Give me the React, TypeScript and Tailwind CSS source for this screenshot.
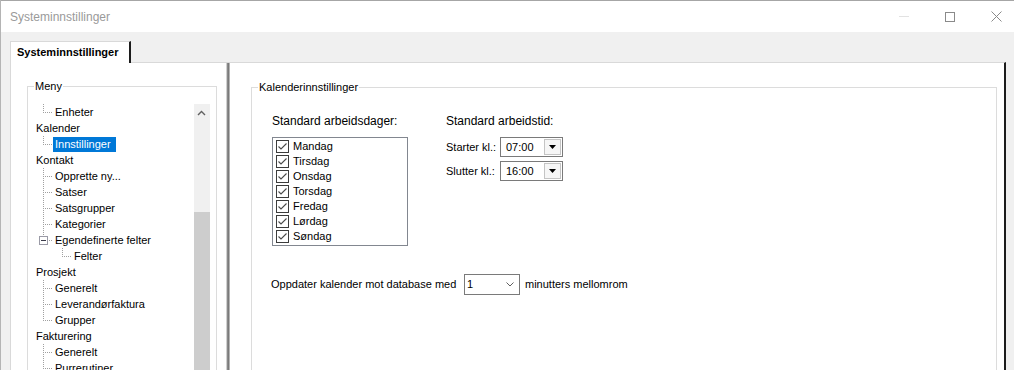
import React from 'react';

type Row = { t: string; lvl: 0 | 1 | 2; v?: 'top' | 'full' | 'box'; sel?: boolean };

const rows: Row[] = [
  { t: 'Enheter', lvl: 1, v: 'top' },
  { t: 'Kalender', lvl: 0 },
  { t: 'Innstillinger', lvl: 1, v: 'top', sel: true },
  { t: 'Kontakt', lvl: 0 },
  { t: 'Opprette ny...', lvl: 1, v: 'full' },
  { t: 'Satser', lvl: 1, v: 'full' },
  { t: 'Satsgrupper', lvl: 1, v: 'full' },
  { t: 'Kategorier', lvl: 1, v: 'full' },
  { t: 'Egendefinerte felter', lvl: 1, v: 'box' },
  { t: 'Felter', lvl: 2, v: 'top' },
  { t: 'Prosjekt', lvl: 0 },
  { t: 'Generelt', lvl: 1, v: 'full' },
  { t: 'Leverandørfaktura', lvl: 1, v: 'full' },
  { t: 'Grupper', lvl: 1, v: 'top' },
  { t: 'Fakturering', lvl: 0 },
  { t: 'Generelt', lvl: 1, v: 'full' },
  { t: 'Purrerutiner', lvl: 1, v: 'full' },
];

const dot = { stroke: '#a0a0a0', strokeDasharray: '1 1', strokeWidth: 1 };

function Connector({ lvl, v }: { lvl: 0 | 1 | 2; v?: Row['v'] }) {
  if (lvl === 0) return <div className="w-px shrink-0" />;
  const w = lvl === 1 ? 20 : 39;
  const x = lvl === 1 ? 10 : 29;
  return (
    <svg width={w} height={16} className="shrink-0" shapeRendering="crispEdges">
      {v === 'box' ? (
        <>
          <line x1={x + 0.5} y1={0} x2={x + 0.5} y2={4} {...dot} />
          <rect x={6.5} y={4.5} width={8} height={8} fill="#fff" stroke="#9a9aa6" strokeWidth={1} />
          <line x1={8} y1={8.5} x2={13} y2={8.5} stroke="#3b3b4a" strokeWidth={1} />
          <line x1={16} y1={8.5} x2={20} y2={8.5} {...dot} />
        </>
      ) : (
        <>
          <line x1={x + 0.5} y1={0} x2={x + 0.5} y2={v === 'full' ? 16 : 9} {...dot} />
          <line x1={x + 2} y1={8.5} x2={x + 10} y2={8.5} {...dot} />
        </>
      )}
    </svg>
  );
}

function Check() {
  return (
    <svg width="13" height="13" className="shrink-0" shapeRendering="geometricPrecision">
      <rect x="0.5" y="0.5" width="12" height="12" fill="#fff" stroke="#3c3c3c" strokeWidth="1" />
      <path d="M2.5 6.5 L5 9 L10.5 3.5" fill="none" stroke="#4a4a4a" strokeWidth="1.1" />
    </svg>
  );
}

function TimeCombo({ value }: { value: string }) {
  return (
    <div className="w-[63px] h-[20px] border border-[#7a7a7a] bg-white flex items-center">
      <span className="flex-1 pl-[5px] text-[11px] leading-none text-black">{value}</span>
      <div className="w-[17px] h-[16px] mr-px border border-[#c4c4c4] bg-[#f6f6f6] flex items-center justify-center">
        <svg width="7" height="4">
          <polygon points="0,0 7,0 3.5,4" fill="#000" />
        </svg>
      </div>
    </div>
  );
}

const days = ['Mandag', 'Tirsdag', 'Onsdag', 'Torsdag', 'Fredag', 'Lørdag', 'Søndag'];

export default function App() {
  return (
    <div className="w-[1014px] h-[370px] overflow-hidden bg-[#f0f0f0] border-l border-[#b4b4b4] font-['Liberation_Sans',Arial,sans-serif] text-black flex flex-col">
      {/* Title bar */}
      <div className="h-[32px] shrink-0 bg-white border-t border-[#a6a6a6] flex items-center">
        <span className="pl-[9px] pt-px text-[12px] text-[#9a9a9a]">Systeminnstillinger</span>
        <div className="ml-auto mr-[-5px] flex h-full">
          <div className="w-[46px] flex items-center justify-center">
            <div className="w-[10px] h-px bg-[#e2e2e2]" />
          </div>
          <div className="w-[46px] flex items-center justify-center">
            <div className="w-[10px] h-[10px] border border-[#8a8a8a]" />
          </div>
          <div className="w-[46px] flex items-center justify-center">
            <svg width="11" height="11">
              <path d="M0.5 0.5 L10.5 10.5 M10.5 0.5 L0.5 10.5" stroke="#8a8a8a" strokeWidth="1" />
            </svg>
          </div>
        </div>
      </div>

      {/* Tab strip */}
      <div className="h-[30px] shrink-0 flex items-end pl-[9px]">
        <div className="relative z-10 h-[22px] -mb-px w-[121px] bg-white border-t border-l border-[#d9d9d9] border-r-2 border-r-[#1c1c1c] flex items-center pl-[6px]">
          <span className="text-[11px] font-bold">Systeminnstillinger</span>
        </div>
      </div>

      {/* Tab page */}
      <div className="flex-1 ml-[9px] w-[996px] bg-white border-t border-l border-[#d9d9d9] border-r-2 border-r-[#1c1c1c] flex">
        {/* Left panel */}
        <div className="w-[215px] shrink-0 pl-[16px] pt-[23px]">
          <div className="w-[190px] h-[400px] border border-[#dcdcdc] flex flex-col">
            <span className="-mt-[8px] ml-[6px] px-px bg-white self-start text-[11px] leading-[14px]">Meny</span>
            <div className="mt-[11px] ml-[5px] w-[177px] flex">
              <div className="w-[161px] flex flex-col text-[11px]">
                {rows.map((r, i) => (
                  <div key={i} className="h-[16px] flex items-center">
                    <Connector lvl={r.lvl} v={r.v} />
                    <span
                      className={
                        r.sel
                          ? 'h-[15px] leading-[15px] pl-[2px] pr-[5px] bg-[#0078d7] text-white whitespace-nowrap'
                          : 'h-[15px] leading-[15px] pl-[2px] pr-[5px] whitespace-nowrap'
                      }
                    >
                      {r.t}
                    </span>
                  </div>
                ))}
              </div>
              <div className="w-[16px] h-[300px] bg-[#f0f0f0] flex flex-col">
                <div className="h-[17px] flex items-start justify-center">
                  <svg width="16" height="17">
                    <path d="M4 11 L7.5 7.5 L11 11" fill="none" stroke="#606060" strokeWidth="1.4" />
                  </svg>
                </div>
                <div className="mt-[91px] flex-1 bg-[#cdcdcd]" />
              </div>
            </div>
          </div>
        </div>

        {/* Splitter */}
        <div className="w-[4px] shrink-0 flex">
          <div className="w-px bg-[#d0d0d0]" />
          <div className="w-px bg-[#8a8a8a]" />
          <div className="w-px bg-[#7a7a7a]" />
          <div className="w-px bg-[#b4b4b4]" />
        </div>

        {/* Right panel */}
        <div className="flex-1 pl-[21px] pr-[7px] pt-[24px]">
          <div className="h-[400px] border border-[#dcdcdc] flex flex-col">
            <span className="-mt-[8px] ml-[6px] px-px bg-white self-start text-[11px] leading-[14px]">
              Kalenderinnstillinger
            </span>
            <div className="mt-[20px] pl-[20px] flex">
              <div className="w-[174px] flex flex-col">
                <span className="text-[12px] leading-[14px]">Standard arbeidsdager:</span>
                <div className="mt-[9px] w-[136px] h-[109px] border border-[#828790] pt-px flex flex-col">
                  {days.map((d) => (
                    <div key={d} className="h-[15px] flex items-center pl-[3px] gap-[4px]">
                      <Check />
                      <span className="text-[11px] leading-none">{d}</span>
                    </div>
                  ))}
                </div>
              </div>
              <div className="flex flex-col">
                <span className="text-[12px] leading-[14px]">Standard arbeidstid:</span>
                <div className="mt-[9px] flex items-center">
                  <span className="w-[54px] text-[11px]">Starter kl.:</span>
                  <TimeCombo value="07:00" />
                </div>
                <div className="mt-[4px] flex items-center">
                  <span className="w-[54px] text-[11px]">Slutter kl.:</span>
                  <TimeCombo value="16:00" />
                </div>
              </div>
            </div>
            <div className="mt-[28px] pl-[19px] flex items-center text-[11px]">
              <span className="w-[193px] whitespace-nowrap">Oppdater kalender mot database med</span>
              <div className="w-[56px] h-[21px] border border-[#7a7a7a] bg-white flex items-center">
                <span className="flex-1 pl-[2px] leading-none">1</span>
                <svg width="8" height="5" className="mr-[5px]">
                  <path d="M0.5 0.5 L4 4 L7.5 0.5" fill="none" stroke="#606060" strokeWidth="1" />
                </svg>
              </div>
              <span className="ml-[5px]">minutters mellomrom</span>
            </div>
          </div>
        </div>
      </div>
    </div>
  );
}
